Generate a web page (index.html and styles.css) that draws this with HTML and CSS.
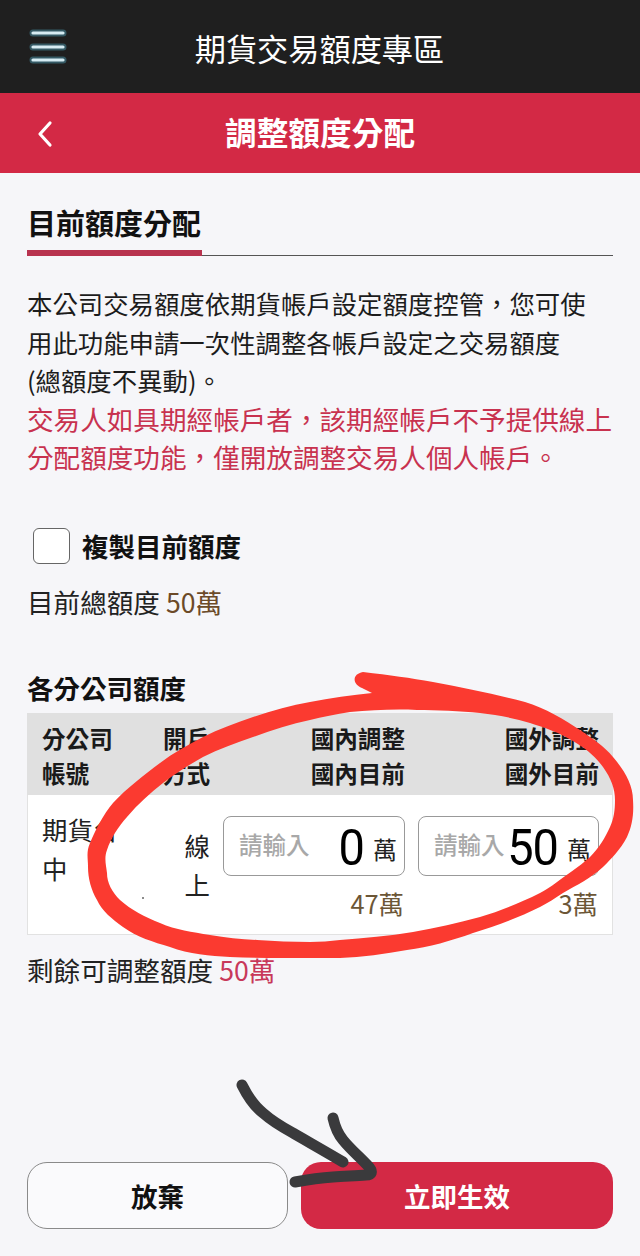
FILE: index.html
```html
<!DOCTYPE html>
<html lang="zh-Hant">
<head>
<meta charset="utf-8">
<title>調整額度分配</title>
<link rel="stylesheet" href="styles.css">
</head>
<body>
<div class="page">
  <header class="topbar">
    <svg class="burger" viewBox="0 0 44 40" width="44" height="40" aria-hidden="true">
      <g class="burger-glow"><path d="M8 6H38M8 20H38M8 33H38"/></g>
      <g class="burger-line"><path d="M8 6H38M8 20H38M8 33H38"/></g>
    </svg>
    <div class="topbar-title">期貨交易額度專區</div>
  </header>
  <div class="subbar">
    <svg class="back" viewBox="0 0 18 28" width="18" height="28" aria-hidden="true"><path d="M14 3L4 14L14 25"/></svg>
    <h1 class="subbar-title">調整額度分配</h1>
  </div>
  <main class="content">
    <div class="section-head"><h2 class="section-title">目前額度分配</h2></div>
    <p class="desc">本公司交易額度依期貨帳戶設定額度控管，您可使<br>用此功能申請一次性調整各帳戶設定之交易額度<br>(總額度不異動)。<br><span class="warn">交易人如具期經帳戶者，該期經帳戶不予提供線上<br>分配額度功能，僅開放調整交易人個人帳戶。</span></p>
    <label class="copy"><span class="checkbox"></span><span class="copy-label">複製目前額度</span></label>
    <div class="total">目前總額度 <span class="brown">50萬</span></div>
    <h3 class="table-title">各分公司額度</h3>
    <div class="table">
      <div class="grid head">
        <div>分公司<br>帳號</div>
        <div>開戶<br>方式</div>
        <div class="right">國內調整<br>國內目前</div>
        <div class="right">國外調整<br>國外目前</div>
      </div>
      <div class="grid row">
        <div class="branch">期貨台<br>中</div>
        <div class="mode">線<br>上</div>
        <div class="cell">
          <div class="input"><span class="ph">請輸入</span><span class="val">0</span><span class="unit">萬</span></div>
          <div class="current">47萬</div>
        </div>
        <div class="cell">
          <div class="input"><span class="ph">請輸入</span><span class="val">50</span><span class="unit">萬</span></div>
          <div class="current">3萬</div>
        </div>
      </div>
    </div>
    <div class="remain">剩餘可調整額度 <span class="rose">50萬</span></div>
    <div class="actions">
      <button class="btn btn-ghost">放棄</button>
      <button class="btn btn-primary">立即生效</button>
    </div>
  </main>
  <svg class="scribble" viewBox="0 0 640 1256" width="640" height="1256" aria-hidden="true">
    <path class="ring" fill-rule="evenodd" d="M363 672C390 675 410 678 433 682C465 688 495 694 525 702C545 708 565 720 580 730C593 739 604 746 613 757C625 771 633 785 633 800C634 815 632 826 627 837C620 850 612 858 603 867C591 878 577 885 563 893C555 898 548 903 540 907C518 918 496 926 473 933C451 941 429 947 407 950C385 954 362 957 340 958L310 958C283 958 257 958 230 957C210 956 189 954 170 947C153 942 137 937 123 927C112 919 102 911 97 900C91 890 88 878 88 867C88 858 86 852 90 843C96 829 103 815 113 803C127 788 144 775 160 763C173 753 188 745 203 737C219 729 236 723 253 717C272 711 291 705 310 702C330 698 352 695 372 693L362 688C352 684 352 674 363 672ZM417 710C437 710 460 711 480 713C497 715 514 718 530 723C546 728 560 733 573 741C585 748 595 756 603 767C611 778 615 789 615 800C615 810 614 818 610 827C605 838 599 848 590 857C579 867 566 875 553 885C549 888 545 890 540 893C520 903 500 911 480 917C458 923 436 928 413 932C389 936 364 938 340 940C330 941 320 942 310 942C292 942 275 941 257 940C241 939 226 938 210 935C192 932 176 930 160 923C145 917 131 910 120 900C112 892 107 883 107 873C106 865 104 858 107 850C111 838 118 827 127 817C138 804 150 793 163 783C176 773 189 765 203 757C219 749 236 743 253 737C272 730 291 724 310 720C322 717 336 714 350 712C372 710 395 709 417 710Z"/>
    <path class="arrow" d="M242 1085C248 1097 254 1106 263 1113C272 1121 282 1127 293 1133C312 1144 328 1153 343 1162"/>
    <path class="arrow" d="M333 1118C335 1127 338 1134 343 1140C351 1150 361 1158 369 1167C373 1172 372 1175 366 1175C355 1176 345 1176 333 1177C318 1178 306 1180 295 1182"/>
    <circle class="speck" cx="143" cy="898" r="1"/>
  </svg>
</div>
</body>
</html>
```
FILE: styles.css
```css
* { box-sizing: border-box; margin: 0; padding: 0; }
html, body { width: 640px; height: 1256px; overflow: hidden; }
body { font-family: "Noto Sans CJK TC", "Noto Sans", sans-serif; color: #111; background: #f6f6f9; }
.page { position: relative; width: 640px; height: 1256px; display: flex; flex-direction: column; }

.topbar { flex: 0 0 93px; background: #1f1f1f; display: flex; align-items: center; justify-content: center; position: relative; }
.topbar-title { color: #fff; font-size: 31.2px; line-height: 1; padding-top: 2px; margin-left: -1px; }
.burger { position: absolute; left: 25px; top: 27px; }
.burger path { fill: none; stroke-linecap: round; }
.burger-glow path { stroke: #4d9fb8; stroke-width: 7; opacity: .45; }
.burger-line path { stroke: #d6ecf3; stroke-width: 3.2; }

.subbar { flex: 0 0 80px; background: #d32945; display: flex; align-items: center; justify-content: center; position: relative; }
.subbar-title { color: #fff; font-size: 31.7px; font-weight: 700; line-height: 1; padding-bottom: 2px; }
.back { position: absolute; left: 36px; top: 27px; }
.back path { fill: none; stroke: #fff; stroke-width: 3.2; stroke-linecap: round; stroke-linejoin: round; }

.content { flex: 1; display: flex; flex-direction: column; padding: 0 27px 27px; min-height: 0; }
.section-head { height: 83px; border-bottom: 1.5px solid #555; display: flex; align-items: flex-end; }
.section-title { font-size: 29px; font-weight: 700; line-height: 38px; height: 53px; width: 175px; white-space: nowrap; border-bottom: 6px solid #b8334f; margin-bottom: -1px; }
.desc { margin-top: 28px; font-size: 25.4px; line-height: 38.5px; color: #1c1c1c; white-space: nowrap; }
.warn { color: #c8324f; font-size: 26.6px; }

.copy { display: flex; align-items: center; gap: 12px; margin: 51px 0 0 6px; height: 36px; }
.checkbox { width: 37px; height: 36px; border: 1.5px solid #666; border-radius: 6px; background: #fff; }
.copy-label { font-size: 26.5px; font-weight: 700; }
.total { margin-top: 19px; font-size: 26.6px; line-height: 38px; color: #222; }
.brown { color: #6c4a28; }
.table-title { margin-top: 48px; font-size: 26.5px; font-weight: 700; line-height: 38px; }

.table { margin-top: 6px; background: #fff; border: 1px solid #e2e2e2; border-top: 0; height: 222px; }
.grid { display: grid; grid-template-columns: 108px 47px 182px 181px; column-gap: 13px; padding-left: 14px; }
.head { height: 82px; background: #e0e0e0; margin: 0 -1px; padding: 8px 0 0 15px; font-size: 23.6px; font-weight: 700; line-height: 35px; color: #1a1a1a; }
.head > div { white-space: nowrap; }
.right { text-align: right; }
.row { padding-top: 21px; font-size: 25.4px; line-height: 39px; color: #222; }
.branch { margin-top: -6px; }
.mode { text-align: right; padding-top: 10px; }
.cell { display: flex; flex-direction: column; }
.input { height: 60px; border: 1.5px solid #999; border-radius: 8px; display: flex; align-items: center; padding: 0 7px 0 15px; background: #fff; }
.ph { font-size: 23.5px; font-weight: 500; color: #a8a8a8; padding-bottom: 2px; }
.val { margin-left: auto; font-family: Roboto, sans-serif; font-size: 47px; font-weight: 400; letter-spacing: -1px; line-height: 1; color: #000; transform: scaleY(1.08); padding-top: 3px; }
.unit { font-size: 24px; margin-left: 9px; padding-top: 5px; color: #222; }
.current { margin-top: 8px; text-align: right; font-size: 25.4px; line-height: 38px; padding-right: 1px; color: #6c5636; }

.remain { margin-top: 16px; font-size: 26.6px; line-height: 38px; color: #222; }
.rose { color: #c8385a; }

.actions { margin-top: auto; display: flex; gap: 13px; }
.btn { height: 67px; border-radius: 20px; font-family: inherit; font-size: 26.5px; font-weight: 700; }
.btn-ghost { width: 261px; background: #fafafc; border: 1.5px solid #8a8a8a; color: #111; }
.btn-primary { width: 312px; background: #d32945; border: 0; color: #fff; }

.scribble { position: absolute; left: 0; top: 0; pointer-events: none; }
.ring { fill: #fb3a30; }
.arrow { fill: none; stroke: #3a3a3c; stroke-width: 11; stroke-linecap: round; stroke-linejoin: round; }
.speck { fill: #666; }
```
